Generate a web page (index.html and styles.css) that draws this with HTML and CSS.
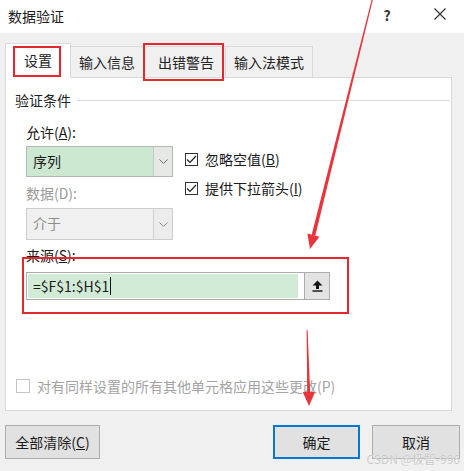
FILE: index.html
```html
<!DOCTYPE html>
<html lang="zh-CN">
<head>
<meta charset="utf-8">
<title>数据验证</title>
<link rel="stylesheet" href="styles.css">
</head>
<body>
<div class="dialog">
  <div class="titlebar">
    <span class="title">数据验证</span>
    <span class="help">?</span>
    <span class="close"><svg width="12" height="12" viewBox="0 0 12 12"><path d="M0.5 0.5L11.5 11.5M11.5 0.5L0.5 11.5" stroke="#333" stroke-width="1.2" fill="none"/></svg></span>
  </div>
  <div class="tabs">
    <div class="tab active">设置</div>
    <div class="tab">输入信息</div>
    <div class="tab wide">出错警告</div>
    <div class="tab">输入法模式</div>
  </div>
  <div class="panel">
    <div class="group-head"><span>验证条件</span><span class="rule"></span></div>
    <div class="criteria">
      <div class="col-left">
        <div class="label">允许(<u>A</u>):</div>
        <div class="select green">
          <span class="value">序列</span>
          <span class="drop"><svg width="9" height="5" viewBox="0 0 9 5"><path d="M0.5 0.5L4.5 4.5L8.5 0.5" stroke="#6d6d6d" stroke-width="1" fill="none"/></svg></span>
        </div>
        <div class="label muted gap">数据(D):</div>
        <div class="select off">
          <span class="value">介于</span>
          <span class="drop"><svg width="9" height="5" viewBox="0 0 9 5"><path d="M0.5 0.5L4.5 4.5L8.5 0.5" stroke="#8a8a8a" stroke-width="1" fill="none"/></svg></span>
        </div>
      </div>
      <div class="col-right">
        <div class="check"><span class="box"><svg width="11" height="9" viewBox="0 0 11 9"><path d="M1 4.5L4 7.5L10 1" stroke="#222" stroke-width="1.2" fill="none"/></svg></span><span>忽略空值(<u>B</u>)</span></div>
        <div class="check"><span class="box"><svg width="11" height="9" viewBox="0 0 11 9"><path d="M1 4.5L4 7.5L10 1" stroke="#222" stroke-width="1.2" fill="none"/></svg></span><span>提供下拉箭头(<u>I</u>)</span></div>
      </div>
    </div>
    <div class="label source-label">来源(<u>S</u>):</div>
    <div class="source">
      <div class="field"><span class="fill">=$F$1:$H$1<span class="caret"></span></span></div>
      <div class="pick"><svg width="11" height="12" viewBox="0 0 11 12"><path d="M5.5 0.5L10.5 5.5H7V9H4V5.5H0.5Z" fill="#111"/><rect x="0.5" y="10.3" width="10" height="1.4" fill="#111"/></svg></div>
    </div>
    <div class="check apply"><span class="box"></span><span>对有同样设置的所有其他单元格应用这些更改(P)</span></div>
  </div>
  <div class="footer">
    <button class="btn clear">全部清除(<u>C</u>)</button>
    <div class="btn-group">
      <button class="btn primary">确定</button>
      <button class="btn cancel">取消</button>
    </div>
  </div>

  <div class="mark mark-tab1"></div>
  <div class="mark mark-tab3"></div>
  <div class="mark mark-source"></div>
  <svg class="arrows" width="464" height="471" viewBox="0 0 464 471">
    <polygon points="371.6,0 372.8,0 315.2,236 311.6,235" fill="#e8343a"/>
    <polygon points="310,249 307.4,233.6 319.4,236.8" fill="#e8343a"/>
    <polygon points="306.6,330 307.6,330 310.2,393 307.2,393" fill="#e8343a"/>
    <polygon points="309,406 302.8,392 315,392" fill="#e8343a"/>
  </svg>
  <div class="watermark">CSDN @极智-996</div>
</div>
</body>
</html>
```
FILE: styles.css
```css
* { box-sizing: border-box; }
html, body { margin: 0; padding: 0; }
body {
  width: 464px;
  height: 471px;
  overflow: hidden;
  font-family: "Noto Sans CJK SC", "Noto Sans", sans-serif;
  font-size: 14px;
  color: #1b1b1b;
}
.dialog {
  position: relative;
  width: 464px;
  height: 471px;
  background: #f0f0f0;
}
.titlebar {
  height: 33px;
  background: #fff;
  display: flex;
  align-items: center;
  padding-left: 8px;
}
.title { flex: 1; line-height: 20px; margin-top: -1px; }
.help {
  width: 20px;
  text-align: center;
  font-weight: bold;
  font-size: 14px;
  line-height: 20px;
  margin-top: -4px;
  margin-right: 33px;
  color: #333;
}
.close {
  width: 20px;
  height: 20px;
  display: flex;
  align-items: center;
  justify-content: center;
  margin-right: 14px;
  margin-top: -5px;
}
.tabs {
  margin-top: 10px;
  height: 34px;
  display: flex;
  align-items: flex-end;
  padding-left: 5px;
}
.tab {
  height: 31px;
  padding: 0 8px;
  border: 1px solid #d9d9d9;
  border-bottom: none;
  margin-left: -1px;
  line-height: 30px;
  background: #f0f0f0;
  color: #222;
  white-space: nowrap;
}
.tab.wide { padding: 0 11px 0 14px; }
.tab.active {
  height: 35px;
  margin-left: 0;
  margin-bottom: -1px;
  padding: 0 18px;
  line-height: 33px;
  background: #fff;
  position: relative;
  z-index: 1;
}
.panel {
  margin: 0 12px 0 5px;
  height: 334px;
  border: 1px solid #d9d9d9;
  background: #fff;
  padding-top: 12px;
}
.group-head {
  display: flex;
  align-items: center;
  height: 20px;
  line-height: 20px;
  padding-left: 9px;
  color: #222;
}
.rule {
  flex: 1;
  height: 1px;
  background: #dcdcdc;
  margin-left: 6px;
  margin-right: 1px;
}
.criteria {
  display: flex;
  margin-left: 20px;
  margin-top: 12px;
}
.col-left { width: 147px; }
.label { line-height: 20px; height: 20px; }
.label.muted { color: #9a9a9a; }
.label.gap { margin-top: 6px; }
.select {
  display: flex;
  height: 31px;
  margin-top: 4px;
  border: 1px solid #b7b7b7;
}
.select.off { height: 32px; margin-top: 5px; border-color: #cdcdcd; background: #f0f0f0; color: #8e8e8e; }
.select.green { background: #cde8d1; }
.value { flex: 1; padding-left: 6px; line-height: 29px; }
.drop {
  width: 19px;
  display: flex;
  align-items: center;
  justify-content: center;
  border-left: 1px solid #c8c8c8;
  background: #e4e9e4;
}
.select.off .drop { background: #ececec; border-left-color: #d0d0d0; }
.col-right {
  margin-left: 12px;
  margin-top: 27px;
  display: flex;
  flex-direction: column;
  gap: 9px;
}
.check {
  display: flex;
  align-items: center;
  height: 20px;
  line-height: 20px;
  gap: 7px;
  white-space: nowrap;
}
.box {
  width: 13px;
  height: 13px;
  border: 1px solid #333;
  background: #fff;
  display: flex;
  align-items: center;
  justify-content: center;
}
.source-label { margin-left: 20px; margin-top: 5px; }
.source {
  display: flex;
  margin-left: 20px;
  margin-top: 7px;
  height: 28px;
}
.field {
  width: 279px;
  height: 28px;
  border: 1px solid #ababab;
  padding: 1px 6px 1px 1px;
  background: #fff;
  display: flex;
}
.fill {
  flex: 1;
  background: #d2ebd6;
  line-height: 24px;
  padding-left: 5px;
  display: flex;
  align-items: center;
  white-space: nowrap;
}
.caret {
  width: 1px;
  height: 18px;
  background: #111;
  margin-left: 1px;
}
.pick {
  width: 25px;
  height: 28px;
  border: 1px solid #adadad;
  border-left: none;
  background: #e3e3e3;
  display: flex;
  align-items: center;
  justify-content: center;
}
.check.apply {
  margin-left: 10px;
  margin-top: 76px;
  color: #a3a3a3;
  gap: 7px;
}
.check.apply .box {
  width: 14px;
  height: 14px;
  border-color: #c4c4c4;
}
.footer {
  display: flex;
  justify-content: space-between;
  margin-top: 14px;
  padding: 0 4px 0 5px;
}
.btn-group { display: flex; gap: 12px; }
.btn {
  height: 34px;
  border: 1px solid #adadad;
  background: #e1e1e1;
  font-family: inherit;
  font-size: 14px;
  color: #1b1b1b;
  padding: 0;
  line-height: 20px;
}
.btn.clear { width: 95px; }
.btn.primary { width: 87px; border: 2px solid #0078d7; }
.btn.cancel { width: 88px; }
.mark {
  position: absolute;
  z-index: 3;
  border: 2px solid #e5282d;
  pointer-events: none;
}
.mark-tab1 { left: 13px; top: 46px; width: 48px; height: 31px; }
.mark-tab3 { left: 143px; top: 43px; width: 81px; height: 38px; }
.mark-source { left: 22px; top: 257px; width: 327px; height: 57px; border-width: 2.5px; }
.arrows {
  position: absolute;
  z-index: 3;
  left: 0;
  top: 0;
  pointer-events: none;
}
.watermark {
  position: absolute;
  z-index: 3;
  right: 4px;
  top: 452px;
  font-size: 12px;
  line-height: 14px;
  color: #c9c9c9;
  text-shadow: 0 0 1px #fff;
  white-space: nowrap;
}
```
